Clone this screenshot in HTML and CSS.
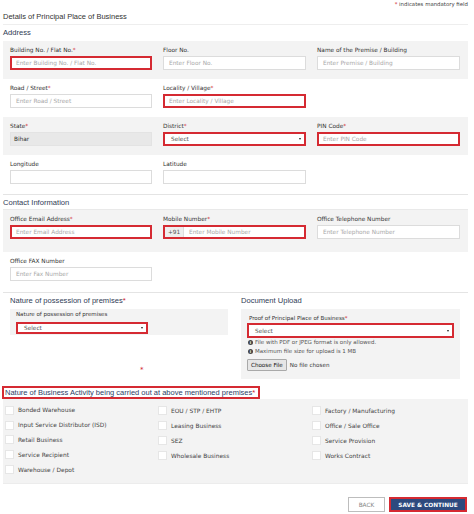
FILE: index.html
```html
<!DOCTYPE html>
<html>
<head>
<meta charset="utf-8">
<link rel="stylesheet" href="styles.css">
</head>
<body>
<div class="page">
  <div class="mandatory"><span class="req">*</span> indicates mandatory field</div>
  <div class="title">Details of Principal Place of Business</div>
  <div class="section-head">Address</div>
  <div class="panel">
    <div class="row grey">
      <div class="field"><div class="label">Building No. / Flat No.<span class="req">*</span></div><div class="input err">Enter Building No. / Flat No.</div></div>
      <div class="field"><div class="label">Floor No.</div><div class="input">Enter Floor No.</div></div>
      <div class="field"><div class="label">Name of the Premise / Building</div><div class="input">Enter Premise / Building</div></div>
    </div>
    <div class="row">
      <div class="field"><div class="label">Road / Street<span class="req">*</span></div><div class="input">Enter Road / Street</div></div>
      <div class="field"><div class="label">Locality / Village<span class="req">*</span></div><div class="input err">Enter Locality / Village</div></div>
      <div class="field"></div>
    </div>
    <div class="row grey">
      <div class="field"><div class="label">State<span class="req">*</span></div><div class="input disabled">Bihar</div></div>
      <div class="field"><div class="label">District<span class="req">*</span></div><div class="input select err"><span>Select</span><span class="arrow"></span></div></div>
      <div class="field"><div class="label">PIN Code<span class="req">*</span></div><div class="input err">Enter PIN Code</div></div>
    </div>
    <div class="row">
      <div class="field"><div class="label">Longitude</div><div class="input"></div></div>
      <div class="field"><div class="label">Latitude</div><div class="input"></div></div>
      <div class="field"></div>
    </div>
  </div>

  <div class="section-head bordered">Contact Information</div>
  <div class="panel">
    <div class="row grey tall">
      <div class="field"><div class="label">Office Email Address<span class="req">*</span></div><div class="input err">Enter Email Address</div></div>
      <div class="field"><div class="label">Mobile Number<span class="req">*</span></div><div class="input err mobile"><span class="prefix">+91</span><span class="ph">Enter Mobile Number</span></div></div>
      <div class="field"><div class="label">Office Telephone Number</div><div class="input">Enter Telephone Number</div></div>
    </div>
    <div class="row">
      <div class="field"><div class="label">Office FAX Number</div><div class="input">Enter Fax Number</div></div>
      <div class="field"></div>
      <div class="field"></div>
    </div>
  </div>

  <div class="split">
    <div class="col-left">
      <div class="sub-head">Nature of possession of premises<span class="req">*</span></div>
      <div class="box box-left">
        <div class="box-label">Nature of possession of premises</div>
        <div class="input select err small-select"><span>Select</span><span class="arrow"></span></div>
      </div>
      <div class="stray"><span class="req">*</span></div>
    </div>
    <div class="col-right">
      <div class="sub-head">Document Upload</div>
      <div class="box box-right">
        <div class="box-label">Proof of Principal Place of Business<span class="req">*</span></div>
        <div class="input select err wide-select"><span>Select</span><span class="arrow"></span></div>
        <div class="info"><span class="i-icon">i</span>File with PDF or JPEG format is only allowed.</div>
        <div class="info"><span class="i-icon">i</span>Maximum file size for upload is 1 MB</div>
        <div class="file-row"><span class="choose">Choose File</span><span>No file chosen</span></div>
      </div>
    </div>
  </div>

  <div class="activity-head">Nature of Business Activity being carried out at above mentioned premises<span class="req">*</span></div>
  <div class="activity">
    <div class="act-col c1">
      <div class="chk"><span class="box9"></span>Bonded Warehouse</div>
      <div class="chk"><span class="box9"></span>Input Service Distributor (ISD)</div>
      <div class="chk"><span class="box9"></span>Retail Business</div>
      <div class="chk"><span class="box9"></span>Service Recipient</div>
      <div class="chk"><span class="box9"></span>Warehouse / Depot</div>
    </div>
    <div class="act-col c2">
      <div class="chk"><span class="box9"></span>EOU / STP / EHTP</div>
      <div class="chk"><span class="box9"></span>Leasing Business</div>
      <div class="chk"><span class="box9"></span>SEZ</div>
      <div class="chk"><span class="box9"></span>Wholesale Business</div>
    </div>
    <div class="act-col c3">
      <div class="chk"><span class="box9"></span>Factory / Manufacturing</div>
      <div class="chk"><span class="box9"></span>Office / Sale Office</div>
      <div class="chk"><span class="box9"></span>Service Provision</div>
      <div class="chk"><span class="box9"></span>Works Contract</div>
    </div>
  </div>

  <div class="actions">
    <div class="btn back">BACK</div>
    <div class="btn save">SAVE &amp; CONTINUE</div>
  </div>
</div>
</body>
</html>
```

FILE: styles.css
```css
* { box-sizing: border-box; }
html, body { margin: 0; padding: 0; background: #fff; }
body { font-family: "DejaVu Sans", Verdana, sans-serif; color: #333; }

.page { width: 474px; padding: 0 6px 0 3px; }

.req { color: #d0202a; }

.mandatory {
  height: 9px; line-height: 9px; font-size: 5.4px; text-align: right;
  margin-right: 0; color: #444;
}

.title {
  height: 16px; line-height: 15px;
  font-family: "Liberation Sans", Arial, sans-serif; font-size: 7.5px; color: #333;
  border-bottom: 1px solid #eeeeee;
}

.section-head {
  height: 16px; line-height: 16px;
  font-family: "Liberation Sans", Arial, sans-serif; font-size: 7.6px; color: #2f3c55;
}
.section-head.bordered {
  margin-top: 1px; height: 16px; line-height: 15px;
  border-top: 1px solid #e4e4e4; border-bottom: 1px solid #e9e9e9;
}

.panel { display: flex; flex-direction: column; }
.row {
  display: grid; grid-template-columns: 142px 143px 143px; column-gap: 11px;
  padding: 5px 0 9px 7px;
}
.row.grey { background: #f3f3f3; }
.row.tall { padding-bottom: 13px; }

.field { display: flex; flex-direction: column; }
.label { height: 8px; line-height: 8px; font-size: 5.8px; color: #333; margin-bottom: 2px; white-space: nowrap; }

.input {
  height: 14px; border: 1px solid #dcdcdc; background: #fff;
  font-size: 5.8px; color: #a8a8a8; line-height: 12px; padding: 0 5px;
  white-space: nowrap; overflow: hidden;
}
.input.err { border: 2px solid #d52a32; line-height: 10px; padding: 0 4px; }
.input.disabled { background: #e8e8e8; border-color: #e3e3e3; color: #333; padding-left: 3px; }
.input.select { display: flex; justify-content: space-between; align-items: center; color: #555; padding-left: 6px; padding-right: 3px; }
.arrow {
  width: 0; height: 0; border-left: 1.5px solid transparent; border-right: 1.5px solid transparent;
  border-top: 2px solid #222;
}
.input.mobile { display: flex; padding: 0; }
.prefix { background: #eeeeee; width: 19px; text-align: center; color: #555; border-right: 1px solid #ddd; }
.ph { padding-left: 5px; }

.split {
  margin-top: 2px; border-top: 1px solid #e4e4e4;
  display: flex; height: 88px;
}
.col-left { width: 238px; padding-left: 7px; }
.col-right { width: 227px; }
.sub-head {
  height: 16px; line-height: 16px;
  font-family: "Liberation Sans", Arial, sans-serif; font-size: 7.6px; color: #2f3c55;
}
.box { background: #f3f3f3; }
.box-left { width: 218px; height: 26px; padding: 1px 0 0 6px; }
.box-label { height: 8px; line-height: 8px; font-size: 5.5px; color: #333; white-space: nowrap; }
.small-select { width: 132px; height: 12px; margin-top: 4px; line-height: 8px; }
.box-right { width: 219px; height: 70px; padding: 5px 0 0 6px; }
.box-right .box-label { padding-left: 2px; }
.wide-select { width: 207px; height: 15px; margin-top: 1px; }
.info { height: 9px; line-height: 9px; font-size: 5.5px; color: #555; display: flex; align-items: center; white-space: nowrap; }
.info:first-of-type { margin-top: 1px; }
.i-icon {
  display: inline-block; width: 5px; height: 5px; border-radius: 50%; background: #444; color: #fff;
  font-size: 4px; line-height: 5px; text-align: center; font-weight: bold; margin: 0 2px 0 1px;
}
.file-row { margin-top: 3px; display: flex; align-items: center; font-size: 5.6px; color: #333; }
.choose {
  display: inline-block; height: 12px; line-height: 10px; padding: 0 3px;
  background: #e6e6e6; border: 1px solid #a9a9a9; border-radius: 1px; margin-right: 3px; color: #111;
}
.stray { margin-top: 31px; padding-left: 130px; font-size: 7px; line-height: 8px; }

.activity-head {
  display: inline-block; margin-top: 4px; margin-left: -1px;
  height: 13px; line-height: 9px; padding: 0 3px 0 1px;
  border: 2px solid #d52a32;
  font-family: "Liberation Sans", Arial, sans-serif; font-size: 7.5px; color: #2c3d66; white-space: nowrap;
}
.activity {
  background: #f3f3f3; display: flex; padding: 4px 0 6px 2px; height: 85px;
  border-bottom: 1px solid #ececec;
}
.act-col { display: flex; flex-direction: column; }
.c1 { width: 153px; }
.c2 { width: 154px; }
.chk { height: 15px; display: flex; align-items: center; font-size: 5.9px; color: #444; white-space: nowrap; }
.box9 { width: 9px; height: 9px; background: #fff; border: 1px solid #e6e6e6; margin-right: 4px; flex: none; }

.actions { display: flex; justify-content: flex-end; gap: 4px; margin-top: 13px; margin-right: 1px; }
.btn { height: 15px; font-size: 5.8px; display: flex; align-items: center; justify-content: center; }
.back { width: 37px; border: 1px solid #bdbdbd; color: #888; background: #fff; }
.save { width: 78px; border: 2px solid #d52a32; background: #2d4a7e; color: #fff; font-weight: bold; }
```
